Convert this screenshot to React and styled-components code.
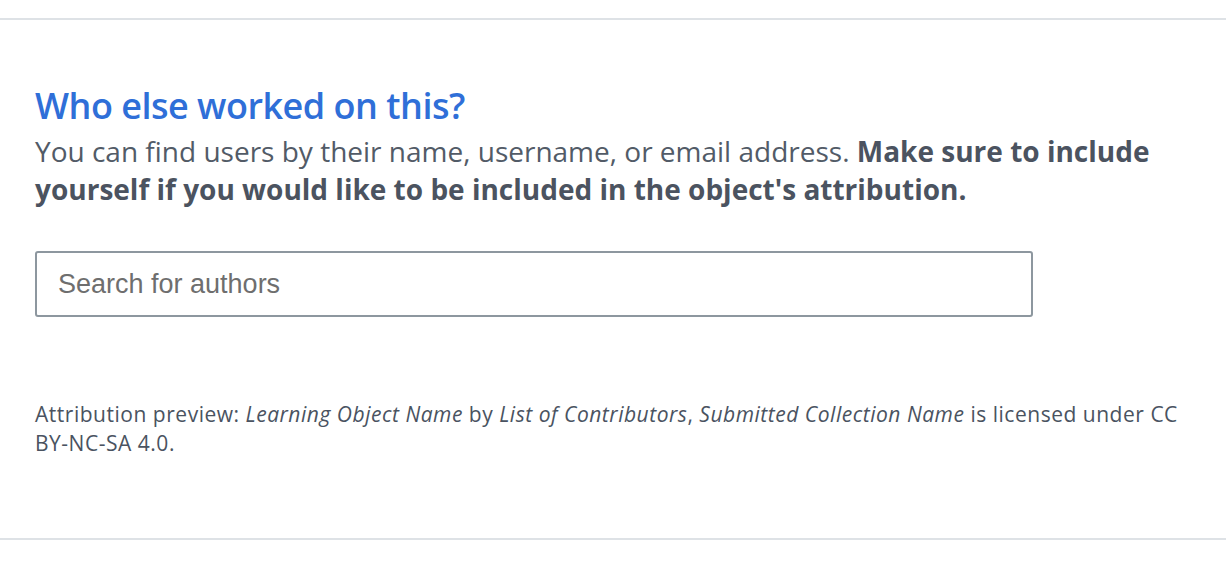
import styled, { createGlobalStyle } from "styled-components";

const GlobalStyle = createGlobalStyle`
    body {
        margin: 0;
        background: #ffffff;
        font-family: 'Open Sans', 'Noto Sans', sans-serif;
    }
`;

export default function App(){
    return(
        <Page>
            <GlobalStyle />
            <Section>
                <Title>Who else worked on this?</Title>
                <Lead>
                    You can find users by their name, username, or email address.{" "}
                    <strong>Make sure to include yourself if you would like to be included in the object's attribution.</strong>
                </Lead>
                <SearchInput type="text" placeholder="Search for authors" />
                <Attribution>
                    Attribution preview: <em>Learning Object Name</em> by <em>List of Contributors</em>, <em>Submitted Collection Name</em> is licensed under CC <License>BY-NC-SA 4.0.</License>
                </Attribution>
            </Section>
        </Page>
    );
};

const Page = styled.div`
    padding-top: 18px;
`;

const Section = styled.section`
    border-top: 2px solid #dee2e6;
    border-bottom: 2px solid #dee2e6;
    padding: 66px 35px 0 35px;
    height: 522px;
    box-sizing: border-box;
`;

const Title = styled.h2`
    margin: 0;
    font-size: 36px;
    font-weight: 600;
    line-height: 40px;
    letter-spacing: -0.5px;
    color: #2f6fd8;
`;

const Lead = styled.p`
    margin: 6px 0 0 0;
    font-size: 28px;
    line-height: 38px;
    letter-spacing: 0;
    color: #525b67;
    max-width: 1160px;

    strong {
        font-weight: 700;
        color: #4b5360;
    }
`;

const SearchInput = styled.input`
    display: block;
    margin-top: 43px;
    width: 998px;
    height: 66px;
    box-sizing: border-box;
    padding: 0 21px;
    border: 2px solid #8d979f;
    border-radius: 3px;
    font-family: 'Liberation Sans', Arial, sans-serif;
    font-size: 27px;
    color: #333;
    outline: none;

    &::placeholder {
        color: #6e6e6e;
    }
`;

const Attribution = styled.p`
    margin: 83px 0 0 0;
    font-size: 21px;
    line-height: 29px;
    letter-spacing: 0.52px;
    color: #4a5361;
    max-width: 1160px;
`;

const License = styled.span`
    white-space: nowrap;
`;
